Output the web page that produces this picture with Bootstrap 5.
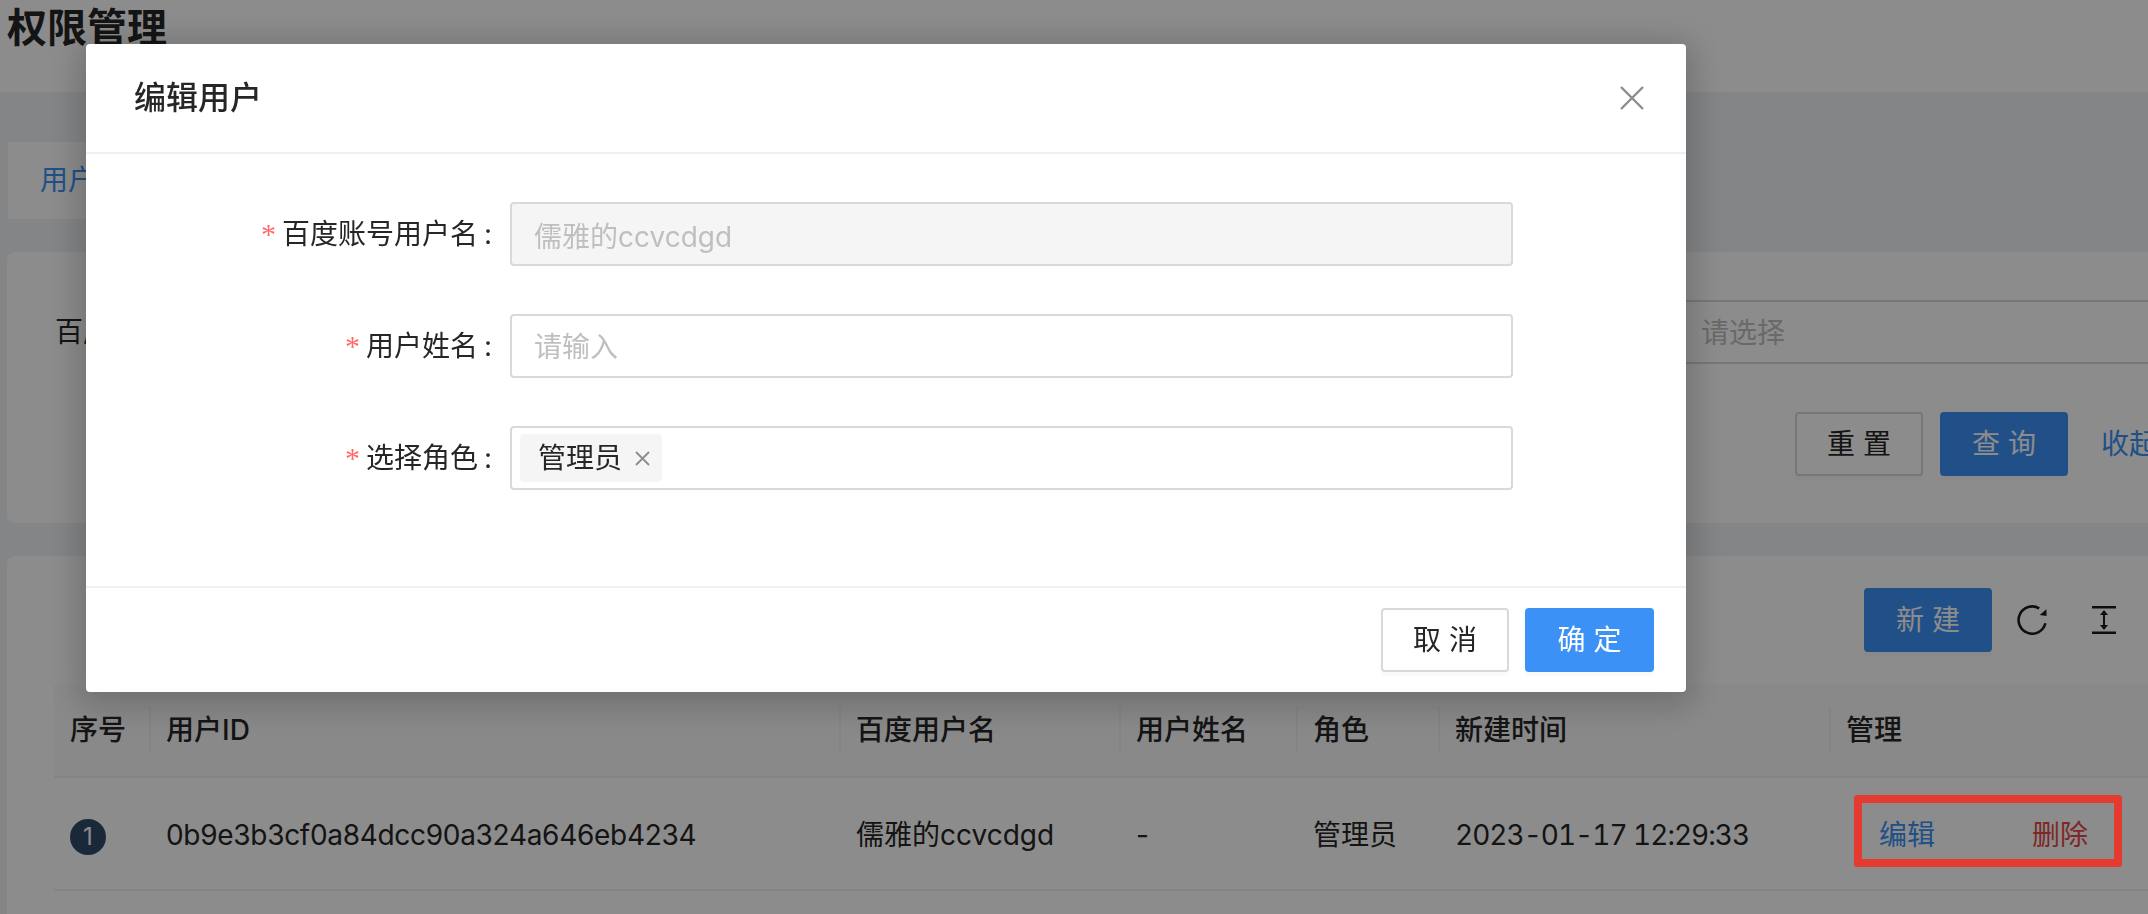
<!DOCTYPE html>
<html lang="zh-CN">
<head>
    <meta charset="UTF-8">
    <meta name="viewport" content="width=device-width, initial-scale=1.0">
    <title>权限管理</title>
    <link href="https://cdn.jsdelivr.net/npm/bootstrap@5.3.0/dist/css/bootstrap.min.css" rel="stylesheet">
    <style>
        html, body { height: 914px; overflow: hidden; }
        body {
            background: #f0f2f5;
            color: #262626;
            font-family: Inter, "Noto Sans CJK SC", sans-serif;
            font-size: 28px;
            line-height: 44px;
        }
        .page-wrap { width: 2172px; }
        .page-head { height: 92px; background: #fff; padding: 6px 0 0 7px; }
        .page-title { font-size: 40px; line-height: 44px; font-weight: 600; margin: 0; }
        .tab-strip { width: 1000px; height: 77px; margin: 50px 0 0 8px; background: #fff; padding: 16px 32px; color: #3c91f7; }
        .panel { background: #fff; border-radius: 8px; margin: 33px 0 0 7px; }
        .filter-panel { height: 271px; padding: 48px 15px 0 48px; }
        .filter-field { flex: 0 0 760px; }
        .filter-field label { flex: none; margin-right: 18px; }
        .plain-input.form-control {
            height: 64px;
            border: 2px solid #d9d9d9;
            border-radius: 4px;
            padding: 9px 22px 7px;
            font-size: 28px;
            line-height: 44px;
            color: #262626;
            background: #fff;
        }
        .plain-input.form-control::placeholder { color: #bfbfbf; }
        .plain-input.form-control:disabled { background: #f5f5f5; color: #bfbfbf; opacity: 1; }
        .filter-field .plain-input { width: 600px; flex: none; }
        .filter-actions { margin-top: 48px; gap: 17px; }
        .act-btn.btn {
            width: 128px;
            height: 64px;
            padding: 0 0 0 8px;
            font-size: 28px;
            line-height: 60px;
            letter-spacing: 8px;
            border: 2px solid #d9d9d9;
            border-radius: 4px;
            background: #fff;
            color: #262626;
            box-shadow: 0 4px 0 rgba(0, 0, 0, .02);
        }
        .act-btn.main-btn { background: #3c91f7; border-color: #3c91f7; color: #fff; }
        .fold-link { color: #3c91f7; text-decoration: none; margin-left: 16px; width: 56px; white-space: nowrap; line-height: 64px; }
        .table-panel { height: 500px; padding: 32px 0 0 47px; }
        .table-tools { height: 64px; padding-right: 56px; margin-bottom: 32px; }
        .tool-icon { display: block; flex: none; }
        .tool-icon.spin-icon { margin-left: 25px; }
        .tool-icon.fit-icon { margin-left: 45px; }
        .user-table.table { table-layout: fixed; width: 2125px; margin: 0; --bs-table-bg: transparent; color: #262626; }
        .user-table th, .user-table td { padding: 0 0 0 16px; border-bottom: 2px solid #f0f0f0; vertical-align: middle; white-space: nowrap; }
        .user-table th { height: 93px; background: #fafafa; font-weight: 500; position: relative; }
        .user-table td { height: 113px; padding-top: 3px; }
        .user-table th + th::before {
            content: "";
            position: absolute;
            left: -1px;
            top: 23px;
            height: 46px;
            width: 2px;
            background: #f0f0f0;
        }
        .user-table th:nth-child(1) { width: 96px; }
        .user-table th:nth-child(2) { width: 690px; }
        .user-table th:nth-child(3) { width: 280px; }
        .user-table th:nth-child(4) { width: 177px; }
        .user-table th:nth-child(5) { width: 142px; }
        .user-table th:nth-child(6) { width: 391px; }
        .uid-text { letter-spacing: -.3px; }
        .time-text { font-variant-numeric: tabular-nums; letter-spacing: -1px; }
        .row-num {
            display: block;
            width: 36px;
            height: 36px;
            margin-top: 3px;
            border-radius: 50%;
            background: #314c69;
            color: #fff;
            font-size: 24px;
            line-height: 36px;
            text-align: center;
        }
        .user-table td.link-cell { padding-left: 49px; }
        .row-link { color: #3c91f7; text-decoration: none; }
        .row-link.del-link { color: #e8484a; margin-left: 97px; }

        .modal-backdrop.show { opacity: .45; }
        .edit-dialog.modal-dialog { max-width: 1600px; width: 1600px; margin: 44px 0 0 86px; }
        .edit-dialog .modal-content { border: 0; border-radius: 4px; box-shadow: 0 6px 32px 8px rgba(0, 0, 0, .2); height: 648px; }
        .edit-dialog .modal-header { height: 110px; padding: 0 42px 0 48px; border-bottom: 2px solid #f0f0f0; border-radius: 0; }
        .edit-dialog .modal-title { font-size: 32px; font-weight: 500; line-height: 44px; }
        .close-x { background: none; border: 0; padding: 0; line-height: 0; }
        .edit-dialog .modal-body { padding: 48px 0 0; flex: none; height: 432px; }
        .form-line { margin-bottom: 48px; }
        .form-label-box { flex: 0 0 406px; margin-right: 18px; }
        .req-mark { color: #ff6b6b; margin-right: 6px; font-family: "Liberation Serif", serif; font-size: 30px; }
        .colon-mark { display: inline-block; width: 14px; text-align: right; }
        .form-line .plain-input { flex: 0 0 1003px; width: 1003px; }
        .tag-box.form-control { padding: 6px 8px; }
        .role-tag { height: 48px; padding: 0 12px 0 18px; background: #f5f5f5; border-radius: 4px; line-height: 48px; }
        .role-tag svg { margin-left: 13px; }
        .edit-dialog .modal-footer { height: 104px; padding: 20px 32px 0 0; border-top: 2px solid #f0f0f0; border-radius: 0; align-items: flex-start; gap: 16px; }
        .edit-dialog .modal-footer > * { margin: 0; }
        .edit-dialog .modal-footer .main-btn { width: 129px; }

        .mark-frame {
            position: absolute;
            left: 1854px;
            top: 795px;
            width: 268px;
            height: 72px;
            border: 8px solid #e53a2f;
            border-radius: 3px;
            z-index: 1060;
        }
    </style>
</head>
<body>
    <div class="page-wrap">
        <div class="page-head">
            <h1 class="page-title">权限管理</h1>
        </div>

        <div class="tab-strip">用户管理</div>

        <div class="panel filter-panel">
            <div class="d-flex">
                <div class="filter-field d-flex">
                    <label class="d-flex align-items-center">百度账号用户名：</label>
                    <input class="form-control plain-input" placeholder="请输入">
                </div>
                <div class="filter-field d-flex">
                    <label class="d-flex align-items-center">用户姓名：</label>
                    <input class="form-control plain-input" placeholder="请输入">
                </div>
                <div class="filter-field d-flex">
                    <label class="d-flex align-items-center">角色：</label>
                    <input class="form-control plain-input" placeholder="请选择">
                </div>
            </div>
            <div class="filter-actions d-flex justify-content-end">
                <button class="btn act-btn">重置</button>
                <button class="btn act-btn main-btn">查询</button>
                <a class="fold-link" href="#">收起</a>
            </div>
        </div>

        <div class="panel table-panel">
            <div class="table-tools d-flex justify-content-end align-items-center">
                <button class="btn act-btn main-btn">新建</button>
                <svg class="tool-icon spin-icon" width="30" height="30" viewBox="0 0 30 30" fill="none">
                    <path d="M28.4 18.3A13.6 13.6 0 1 1 22.2 3.4" stroke="#1c1c1c" stroke-width="2.6"/>
                    <path d="M29.4 4.2 29.6 11 22.7 10Z" fill="#1c1c1c"/>
                </svg>
                <svg class="tool-icon fit-icon" width="24" height="28" viewBox="0 0 24 28" fill="none">
                    <path d="M0 1.3H24M0 26.7H24" stroke="#1c1c1c" stroke-width="2.6"/>
                    <path d="M12 6V22" stroke="#1c1c1c" stroke-width="2"/>
                    <path d="M12 4 16 9H8ZM12 24 8 19H16Z" fill="#1c1c1c"/>
                </svg>
            </div>
            <table class="table user-table">
                <thead>
                    <tr>
                        <th>序号</th>
                        <th>用户ID</th>
                        <th>百度用户名</th>
                        <th>用户姓名</th>
                        <th>角色</th>
                        <th>新建时间</th>
                        <th>管理</th>
                    </tr>
                </thead>
                <tbody>
                    <tr>
                        <td><span class="row-num">1</span></td>
                        <td class="uid-text">0b9e3b3cf0a84dcc90a324a646eb4234</td>
                        <td>儒雅的ccvcdgd</td>
                        <td>-</td>
                        <td>管理员</td>
                        <td class="time-text">2023-01-17 12:29:33</td>
                        <td class="link-cell"><a class="row-link" href="#">编辑</a><a class="row-link del-link" href="#">删除</a></td>
                    </tr>
                </tbody>
            </table>
        </div>
    </div>

    <div class="modal-backdrop show"></div>

    <div class="modal d-block">
        <div class="modal-dialog edit-dialog">
            <div class="modal-content">
                <div class="modal-header">
                    <h5 class="modal-title">编辑用户</h5>
                    <button class="close-x ms-auto" type="button" aria-label="Close">
                        <svg width="24" height="24" viewBox="0 0 24 24" fill="none">
                            <path d="M1 1 23 23M23 1 1 23" stroke="#8c8c8c" stroke-width="2.4"/>
                        </svg>
                    </button>
                </div>
                <div class="modal-body">
                    <div class="form-line d-flex align-items-center">
                        <div class="form-label-box text-end"><span class="req-mark">*</span>百度账号用户名<span class="colon-mark">:</span></div>
                        <input class="form-control plain-input" value="儒雅的ccvcdgd" disabled>
                    </div>
                    <div class="form-line d-flex align-items-center">
                        <div class="form-label-box text-end"><span class="req-mark">*</span>用户姓名<span class="colon-mark">:</span></div>
                        <input class="form-control plain-input" placeholder="请输入">
                    </div>
                    <div class="form-line d-flex align-items-center">
                        <div class="form-label-box text-end"><span class="req-mark">*</span>选择角色<span class="colon-mark">:</span></div>
                        <div class="form-control plain-input tag-box d-flex align-items-center">
                            <span class="role-tag d-inline-flex align-items-center">管理员
                                <svg width="15" height="15" viewBox="0 0 15 15" fill="none">
                                    <path d="M1 1 14 14M14 1 1 14" stroke="#8c8c8c" stroke-width="1.8"/>
                                </svg>
                            </span>
                        </div>
                    </div>
                </div>
                <div class="modal-footer">
                    <button class="btn act-btn">取消</button>
                    <button class="btn act-btn main-btn">确定</button>
                </div>
            </div>
        </div>
    </div>

    <div class="mark-frame"></div>

    <script src="https://cdn.jsdelivr.net/npm/bootstrap@5.3.0/dist/js/bootstrap.bundle.min.js"></script>
</body>
</html>
